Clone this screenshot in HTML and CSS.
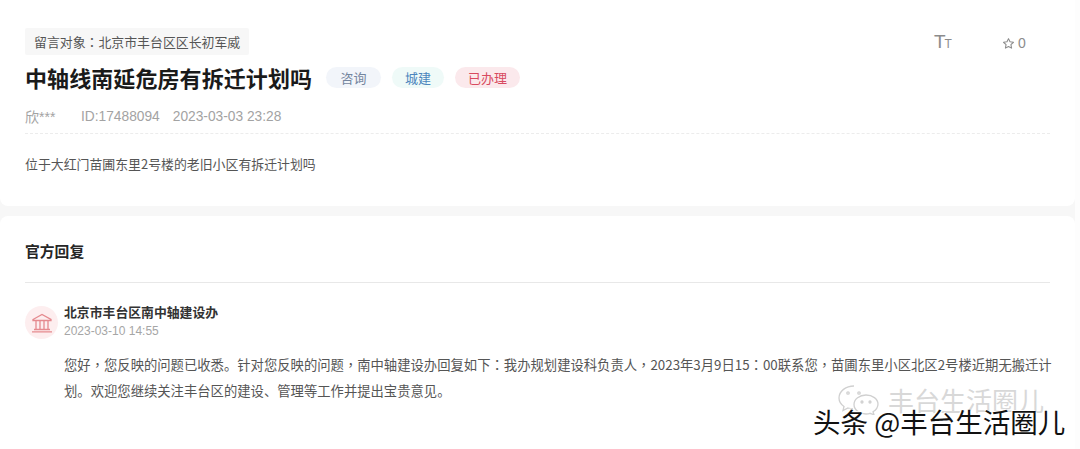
FILE: index.html
```html
<!DOCTYPE html>
<html lang="zh">
<head>
<meta charset="utf-8">
<title>中轴线南延危房有拆迁计划吗</title>
<link rel="stylesheet" href="styles.css">
</head>
<body>
<main class="page">
  <section class="card top">
    <div class="head">
      <span class="target">留言对象<i class="pn" lang="zh-Hant">：</i>北京市丰台区区长初军威</span>
      <div class="tools">
        <span class="tt">T<small>T</small></span>
        <span class="fav">
          <svg width="13" height="13" viewBox="0 0 24 24"><path d="M12 3l2.800 5.900 6.400.8-4.700 4.400 1.200 6.400L12 17.400l-5.700 3.100 1.200-6.400-4.700-4.400 6.400-.8z" fill="none" stroke="#8c8c8c" stroke-width="2" stroke-linejoin="round"/></svg>
          0
        </span>
      </div>
    </div>
    <div class="title-row">
      <h1>中轴线南延危房有拆迁计划吗</h1>
      <span class="tag t1">咨询</span>
      <span class="tag t2">城建</span>
      <span class="tag t3">已办理</span>
    </div>
    <div class="meta"><b>欣***</b><span class="id">ID:17488094</span><span>2023-03-03 23:28</span></div>
    <p class="content">位于大红门苗圃东里2号楼的老旧小区有拆迁计划吗</p>
  </section>
  <section class="card reply">
    <h2>官方回复</h2>
    <div class="org">
      <span class="avatar">
        <svg width="22" height="20" viewBox="0 0 22 20" fill="none" stroke="#e58a8f" stroke-width="1.300"><path d="M2 6.500L11 1.500l9 5v1H2z"/><path d="M5 8v8M9 8v8M13 8v8M17 8v8M3 16.500h16M1 18.800h20"/></svg>
      </span>
      <div class="org-body">
        <div class="org-name">北京市丰台区南中轴建设办</div>
        <div class="org-time">2023-03-10 14:55</div>
        <p class="answer">您好<i class="pn" lang="zh-Hant">，</i>您反映的问题已收悉。针对您反映的问题<i class="pn" lang="zh-Hant">，</i>南中轴建设办回复如下<i class="pn" lang="zh-Hant">：</i>我办规划建设科负责人<i class="pn" lang="zh-Hant">，</i>2023年3月9日15<i class="pn" lang="zh-Hant">：</i>00联系您<i class="pn" lang="zh-Hant">，</i>苗圃东里小区北区2号楼近期无搬迁计划。欢迎您继续关注丰台区的建设、管理等工作并提出宝贵意见。</p>
      </div>
    </div>
  </section>
</main>
<div class="mark-wx">
  <svg width="42" height="30" viewBox="0 0 42 30" fill="none" stroke="#d0d0d0" stroke-width="1.300"><path d="M17 1C9 1 2 6 2 13c0 4 2 6.500 5 8.500l-1 4 5-2.500c2 .6 3 .8 5 .8"/><path d="M29 10c-6.500 0-12 4.200-12 9.500S22.500 29 29 29c1.500 0 3-.2 4-.7l4 1.500-1-3c3-1.800 5-4.500 5-7.800C41 14 35.500 10 29 10z"/><circle cx="11" cy="8" r="1.200"/><circle cx="22" cy="8" r="1.200"/><circle cx="25" cy="17" r="1"/><circle cx="33" cy="17" r="1"/></svg>
  <span>丰台生活圈儿</span>
</div>
<div class="mark-tt">头条 @丰台生活圈儿</div>
</body>
</html>
```
FILE: styles.css
```css
* { box-sizing: border-box; }
html, body { margin: 0; height: 449px; overflow: hidden; }
body {
  background: #fdfdfd;
  font-family: "Noto Sans CJK SC", "Liberation Sans", sans-serif;
  position: relative;
}
.pn { font-style: normal; font-family: "Noto Sans CJK TC", sans-serif; line-height: 1; }
.page {
  width: 1075px;
  height: 449px;
  background: #f7f7f7;
  display: flex;
  flex-direction: column;
  gap: 10px;
}
.card { background: #fff; padding: 0 25px; }
.top { height: 206px; padding-top: 28px; border-radius: 0 0 8px 8px; }
.reply { flex: 1; padding-top: 24px; border-radius: 8px 8px 0 0; }
.head { display: flex; justify-content: space-between; align-items: flex-start; }
.target {
  height: 27px;
  line-height: 27px;
  padding: 0 9px;
  font-size: 12.900px;
  color: #555;
  background: #f7f7f7;
  border-radius: 2px;
}
.tools { display: flex; align-items: center; color: #8c8c8c; padding: 3px 0 0 0; margin-right: -1px; width: 117px; font-family: "Liberation Sans", sans-serif; }
.tt { font-size: 19px; line-height: 22px; width: 68px; }
.tt small { font-size: 12px; margin-left: -1px; }
.fav { display: flex; align-items: center; gap: 3px; font-size: 14px; }
.title-row { display: flex; align-items: center; margin-top: 6px; height: 32px; }
h1 { margin: 0 14px 0 0; font-size: 22px; font-weight: 700; color: #1a1a1a; line-height: 32px; letter-spacing: .08px; }
.tag {
  height: 21px;
  line-height: 21px;
  border-radius: 11px;
  font-size: 13px;
  text-align: center;
}
.t1 { width: 55px; margin-right: 11px; background: #f2f5fa; color: #75869f; }
.t2 { width: 52px; margin-right: 11px; background: #effaf8; color: #4c86bd; }
.t3 { width: 65px; background: #fbe9ec; color: #d84a60; }
.meta { display: flex; margin-top: 12px; height: 24px; line-height: 24px; font-size: 13.750px; color: #a3a3a3; font-family: "Liberation Sans", "Noto Sans CJK SC", sans-serif; }
.meta b { font-weight: 400; width: 56px; font-size: 14px; }
.id { margin-right: 13px; }
.content {
  margin: 4px 0 0;
  padding-top: 20px;
  border-top: 1px dashed #ececec;
  font-size: 12.900px;
  line-height: 20px;
  color: #555;
}
h2 { margin: 0; font-size: 14.800px; font-weight: 700; color: #262626; line-height: 22px; }
.org { margin-top: 20px; padding-top: 23px; border-top: 1px solid #e8e8e8; display: flex; }
.avatar {
  width: 33px;
  height: 33px;
  border-radius: 50%;
  background: #fdeeef;
  display: flex;
  align-items: center;
  justify-content: center;
  margin-right: 6px;
  flex: none;
}
.org-body { flex: 1; }
.org-name { font-size: 12.850px; font-weight: 700; color: #333; line-height: 18px; margin-top: -3px; }
.org-time { font-size: 12px; color: #a6a6a6; line-height: 18px; margin-top: 1px; font-family: "Liberation Sans", sans-serif; }
.answer { margin: 12px -4px 0 0; font-size: 13.330px; line-height: 26px; color: #555; }
.mark-wx {
  position: absolute;
  left: 837px;
  top: 385px;
  display: flex;
  align-items: center;
  gap: 9px;
  font-size: 26px;
  line-height: 30px;
  color: #d8d8d8;
  white-space: nowrap;
}
.mark-tt {
  position: absolute;
  left: 813px;
  top: 404px;
  font-size: 27.500px;
  line-height: 34px;
  color: #111;
  text-shadow: 1px 1px 0 #fff, -1px -1px 0 #fff;
  white-space: nowrap;
}
```
